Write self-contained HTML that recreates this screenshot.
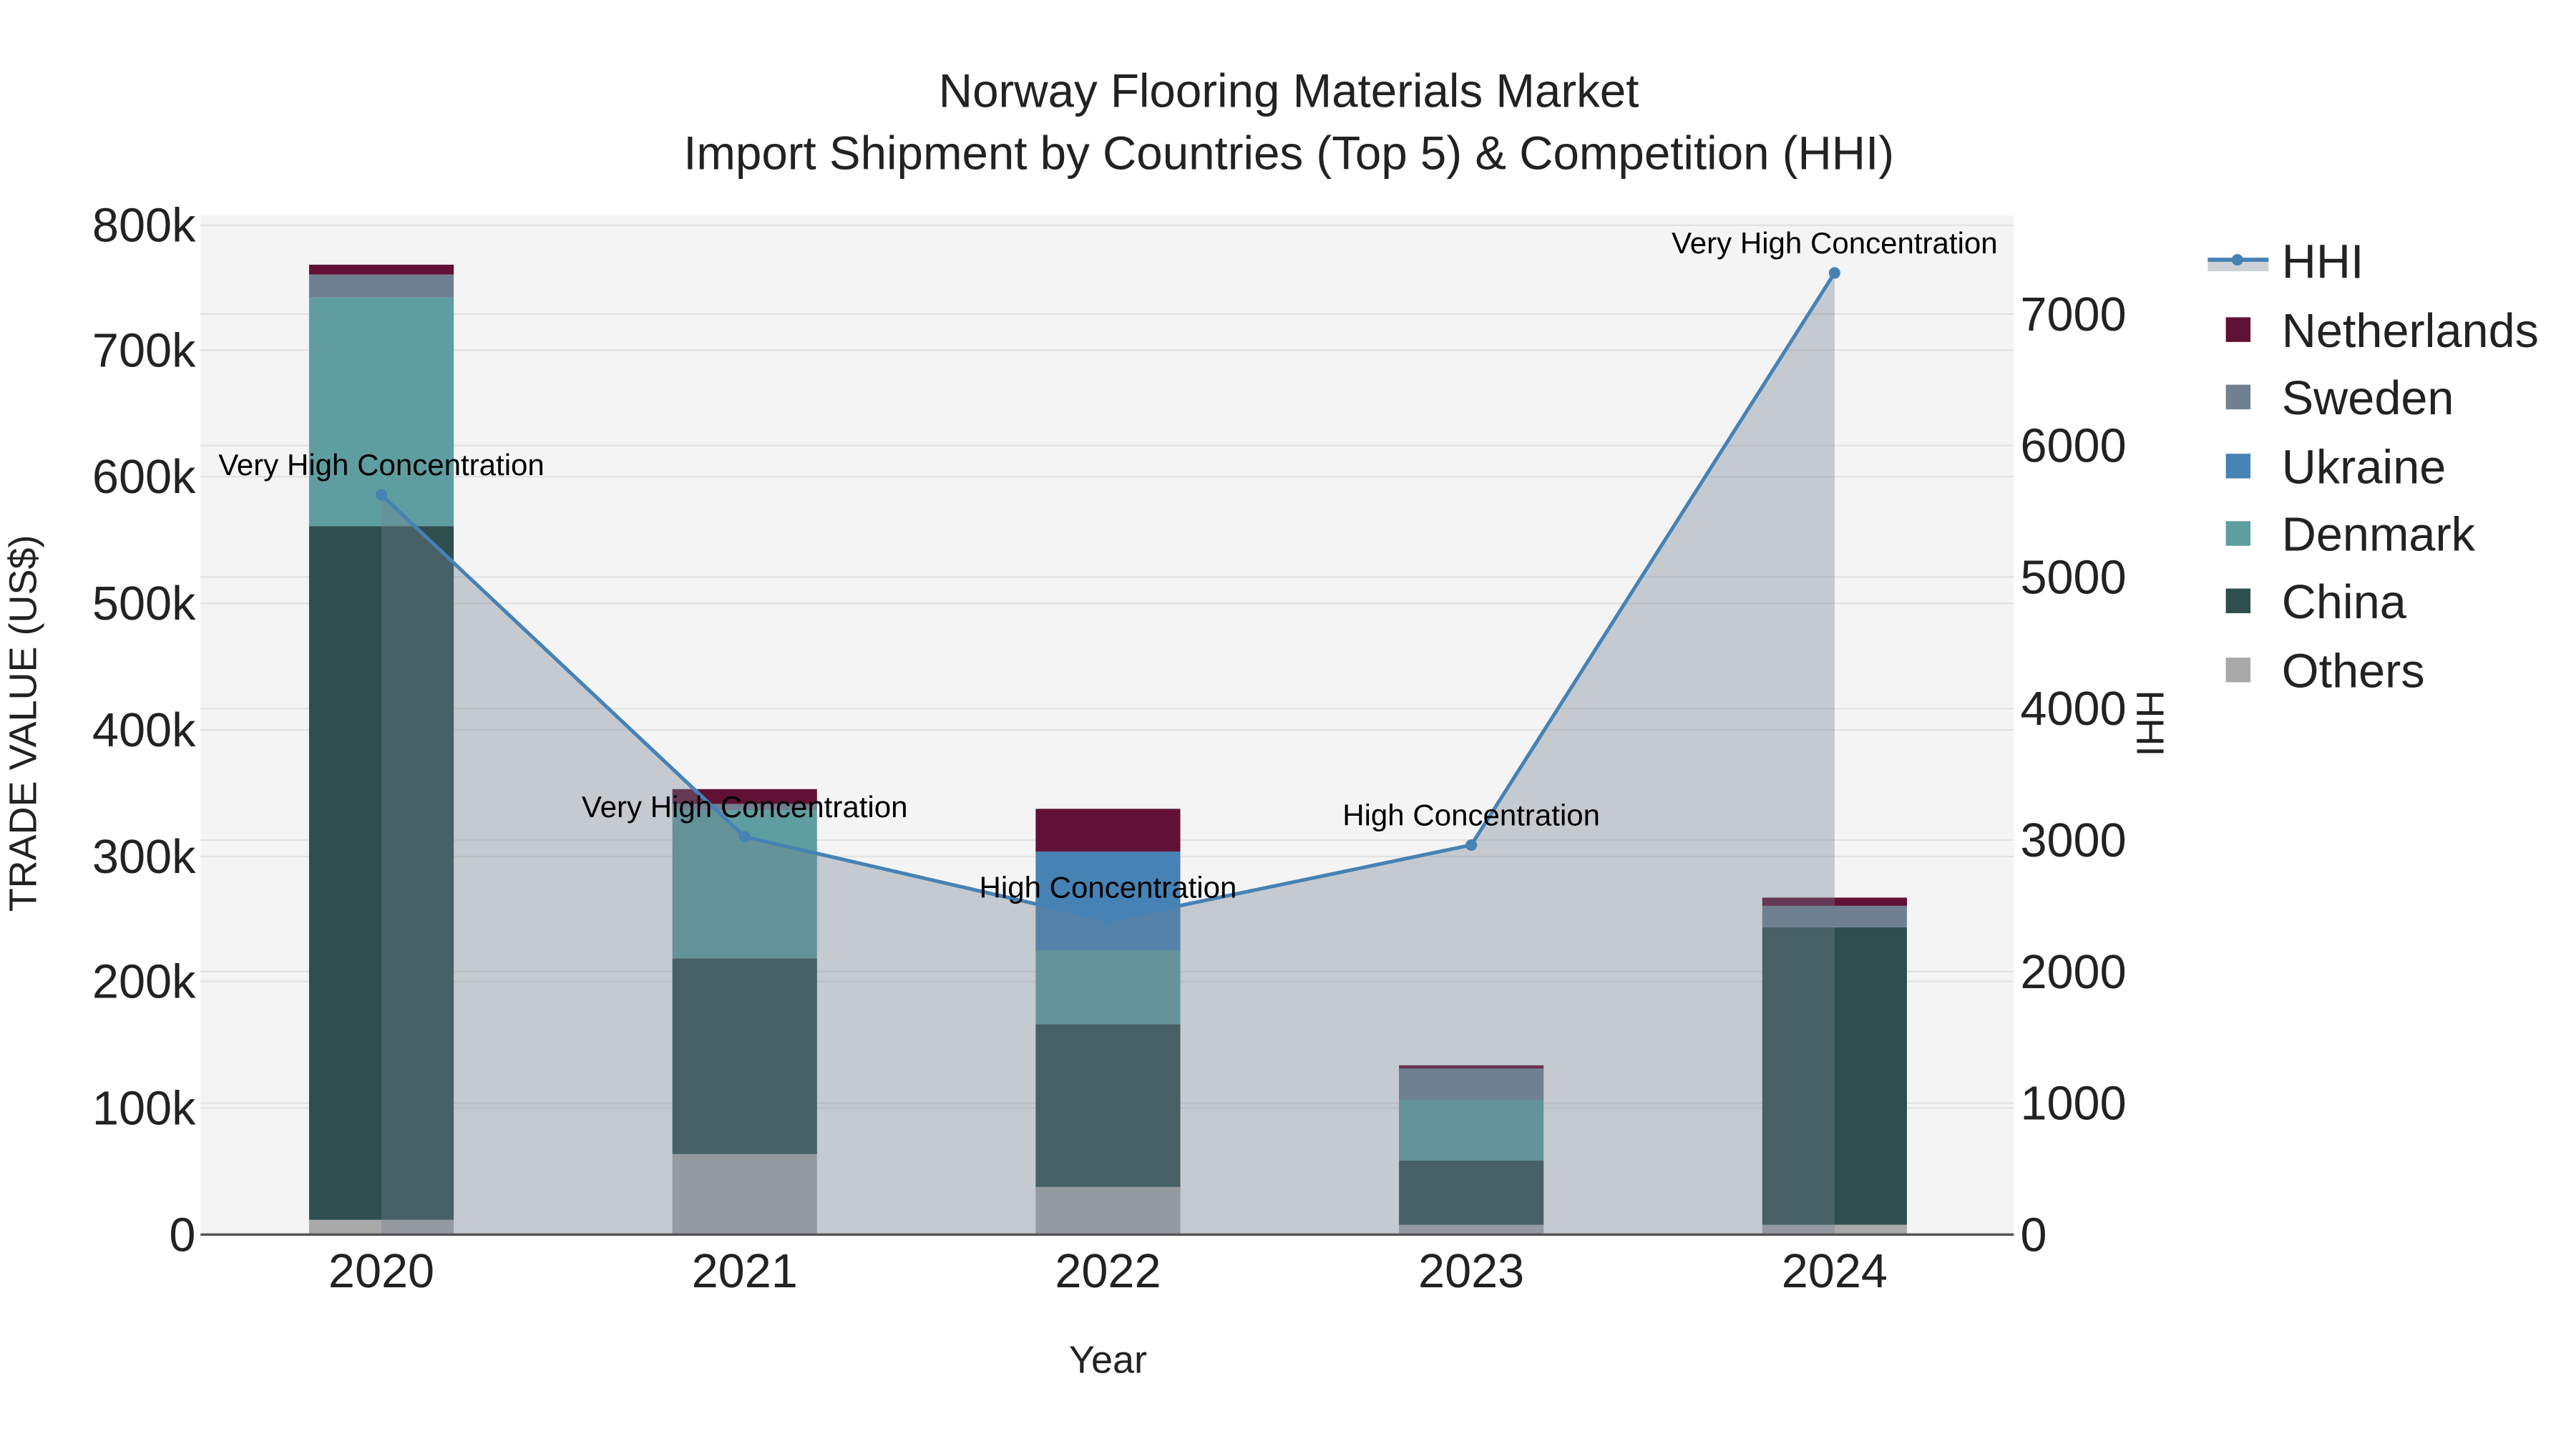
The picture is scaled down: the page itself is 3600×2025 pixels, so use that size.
<!DOCTYPE html>
<html><head><meta charset="utf-8"><style>
html,body{margin:0;padding:0;background:#fff;}
svg{display:block;}
text{font-family:"Liberation Sans",sans-serif;}
</style></head><body>
<svg width="3600" height="2025" viewBox="0 0 1567 881.4" preserveAspectRatio="none" xmlns="http://www.w3.org/2000/svg">
<rect width="1567" height="882" fill="#fff"/>
<rect x="122" y="131" width="1103" height="620" fill="#f4f4f4"/>
<g stroke="#e2e2e2" stroke-width="1">
<line x1="122" x2="1225" y1="137" y2="137"/><line x1="122" x2="1225" y1="213" y2="213"/><line x1="122" x2="1225" y1="290" y2="290"/><line x1="122" x2="1225" y1="367" y2="367"/><line x1="122" x2="1225" y1="444" y2="444"/><line x1="122" x2="1225" y1="521" y2="521"/><line x1="122" x2="1225" y1="597" y2="597"/><line x1="122" x2="1225" y1="674" y2="674"/>
<line x1="122" x2="1225" y1="191" y2="191"/><line x1="122" x2="1225" y1="271" y2="271"/><line x1="122" x2="1225" y1="351" y2="351"/><line x1="122" x2="1225" y1="431" y2="431"/><line x1="122" x2="1225" y1="511" y2="511"/><line x1="122" x2="1225" y1="591" y2="591"/><line x1="122" x2="1225" y1="671" y2="671"/>
</g>
<g>
<rect x="188" y="742" width="88" height="9" fill="#a9a9a9"/>
<rect x="188" y="320" width="88" height="422" fill="#2f4f4f"/>
<rect x="188" y="181" width="88" height="139" fill="#5f9ea0"/>
<rect x="188" y="167" width="88" height="14" fill="#708090"/>
<rect x="188" y="161" width="88" height="6" fill="#601135"/>

<rect x="409" y="702" width="88" height="49" fill="#a9a9a9"/>
<rect x="409" y="583" width="88" height="119" fill="#2f4f4f"/>
<rect x="409" y="493" width="88" height="90" fill="#5f9ea0"/>
<rect x="409" y="489" width="88" height="4" fill="#708090"/>
<rect x="409" y="480" width="88" height="9" fill="#601135"/>

<rect x="630" y="722" width="88" height="29" fill="#a9a9a9"/>
<rect x="630" y="623" width="88" height="99" fill="#2f4f4f"/>
<rect x="630" y="578" width="88" height="45" fill="#5f9ea0"/>
<rect x="630" y="518" width="88" height="60" fill="#4682b4"/>
<rect x="630" y="492" width="88" height="26" fill="#601135"/>

<rect x="851" y="745" width="88" height="6" fill="#a9a9a9"/>
<rect x="851" y="706" width="88" height="39" fill="#2f4f4f"/>
<rect x="851" y="669" width="88" height="37" fill="#5f9ea0"/>
<rect x="851" y="650" width="88" height="19" fill="#708090"/>
<rect x="851" y="648" width="88" height="2" fill="#601135"/>

<rect x="1072" y="745" width="88" height="6" fill="#a9a9a9"/>
<rect x="1072" y="564" width="88" height="181" fill="#2f4f4f"/>
<rect x="1072" y="551" width="88" height="13" fill="#708090"/>
<rect x="1072" y="546" width="88" height="5" fill="#601135"/>
</g>
<polygon points="232,751 232,301 453,509 674,560 895,514 1116,166 1116,751" fill="rgba(112,128,144,0.36)"/>
<polyline points="232,301 453,509 674,560 895,514 1116,166" fill="none" stroke="#4682b4" stroke-width="2.2"/>
<g fill="#4682b4"><circle cx="232" cy="301" r="3.5"/><circle cx="453" cy="509" r="3.5"/><circle cx="674" cy="560" r="3.5"/><circle cx="895" cy="514" r="3.5"/><circle cx="1116" cy="166" r="3.5"/></g>
<line x1="122" x2="1225" y1="751" y2="751" stroke="#555" stroke-width="1.5"/>
<g font-size="18.3" fill="#000" text-anchor="middle">
<text x="232" y="289">Very High Concentration</text>
<text x="453" y="497">Very High Concentration</text>
<text x="674" y="546">High Concentration</text>
<text x="895" y="502">High Concentration</text>
<text x="1116" y="154">Very High Concentration</text>
</g>
<g font-size="28.5" fill="#222" text-anchor="middle">
<text x="784" y="65">Norway Flooring Materials Market</text>
<text x="784" y="103">Import Shipment by Countries (Top 5) &amp; Competition (HHI)</text>
</g>
<g font-size="29" fill="#222" text-anchor="end">
<text x="119" y="147">800k</text><text x="119" y="223">700k</text><text x="119" y="300">600k</text><text x="119" y="377">500k</text><text x="119" y="454">400k</text><text x="119" y="531">300k</text><text x="119" y="607">200k</text><text x="119" y="684">100k</text><text x="119" y="761">0</text>
</g>
<g font-size="29" fill="#222" text-anchor="start">
<text x="1229" y="201">7000</text><text x="1229" y="281">6000</text><text x="1229" y="361">5000</text><text x="1229" y="441">4000</text><text x="1229" y="521">3000</text><text x="1229" y="601">2000</text><text x="1229" y="681">1000</text><text x="1229" y="761">0</text>
</g>
<g font-size="29" fill="#222" text-anchor="middle">
<text x="232" y="783">2020</text><text x="453" y="783">2021</text><text x="674" y="783">2022</text><text x="895" y="783">2023</text><text x="1116" y="783">2024</text>
</g>
<text x="674" y="835" font-size="23.5" fill="#222" text-anchor="middle">Year</text>
<text transform="translate(22,440) rotate(-90)" font-size="23.5" fill="#222" text-anchor="middle">TRADE VALUE (US$)</text>
<text transform="translate(1300,440) rotate(90)" font-size="23.5" fill="#222" text-anchor="middle">HHI</text>
<rect x="1343" y="158" width="37" height="7" fill="rgba(112,128,144,0.36)"/>
<line x1="1343" x2="1380" y1="158" y2="158" stroke="#4682b4" stroke-width="2.5"/>
<circle cx="1361" cy="158" r="3.5" fill="#4682b4"/>
<g font-size="29" fill="#222">
<text x="1388" y="169">HHI</text>
<text x="1388" y="211">Netherlands</text>
<text x="1388" y="252">Sweden</text>
<text x="1388" y="294">Ukraine</text>
<text x="1388" y="335">Denmark</text>
<text x="1388" y="376">China</text>
<text x="1388" y="418">Others</text>
</g>
<rect x="1354" y="193" width="15" height="15" fill="#601135"/>
<rect x="1354" y="234" width="15" height="15" fill="#708090"/>
<rect x="1354" y="276" width="15" height="15" fill="#4682b4"/>
<rect x="1354" y="317" width="15" height="15" fill="#5f9ea0"/>
<rect x="1354" y="358" width="15" height="15" fill="#2f4f4f"/>
<rect x="1354" y="400" width="15" height="15" fill="#a9a9a9"/>
</svg>
</body></html>
